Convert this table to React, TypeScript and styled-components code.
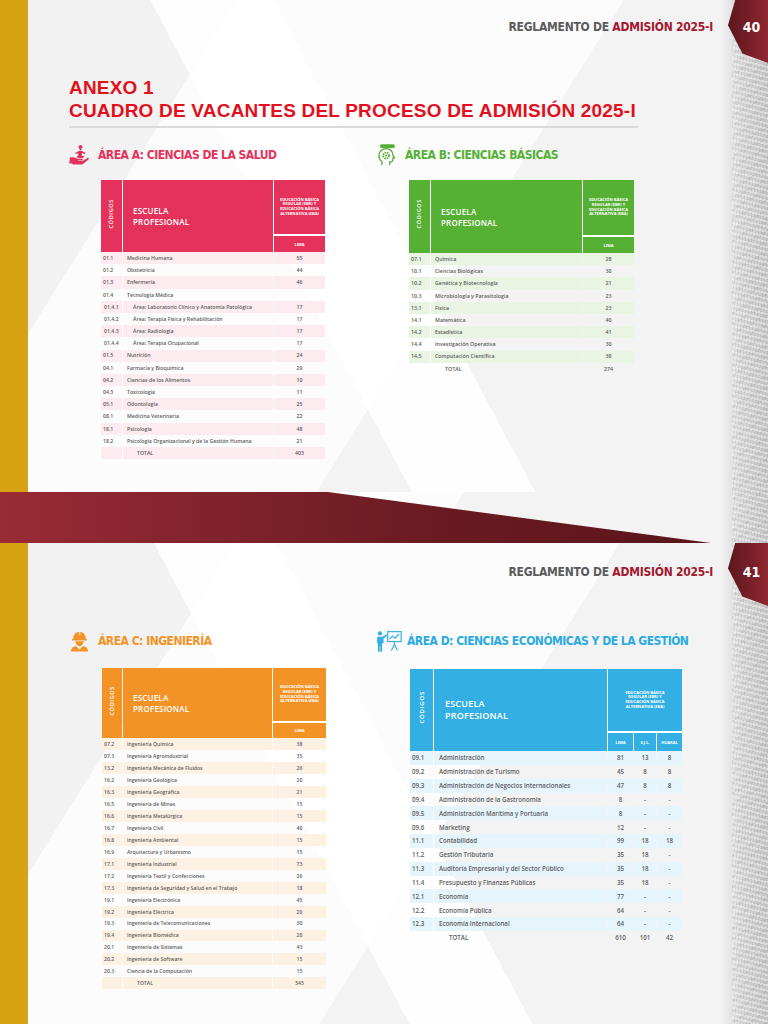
import React from 'react';
import styled, { createGlobalStyle } from 'styled-components';

const GlobalStyle = createGlobalStyle`
  * { box-sizing: border-box; }
  body { margin: 0; background: #f5f5f5; }
`;

const condensed = `"Liberation Sans Narrow", "DejaVu Sans Condensed", "Roboto Condensed", "Liberation Sans", sans-serif`;
const tableFont = `"Open Sans", "Liberation Sans", sans-serif`;

const pageBackground = `
  linear-gradient(to right, #d7a312 0 28px, transparent 28px),
  repeating-linear-gradient(97deg, rgba(90,90,90,.08) 0 1px, transparent 1px 3px) right top / 36px 100% no-repeat,
  repeating-linear-gradient(14deg, rgba(255,255,255,.4) 0 2px, transparent 2px 5px) right top / 36px 100% no-repeat,
  repeating-linear-gradient(-30deg, rgba(120,120,120,.10) 0 3px, transparent 3px 9px) right top / 36px 100% no-repeat,
  linear-gradient(to right, rgba(214,214,214,0), #d6d6d6 45%, #c6c6c6) right top / 48px 100% no-repeat,
  linear-gradient(62deg, transparent 0 40%, rgba(255,255,255,.9) 40% 52%, transparent 52%),
  linear-gradient(122deg, #f2f2f2 0 22%, #fcfcfc 22% 58%, #f3f3f3 58% 100%)
`;

const Sheet = styled.main`
  width: 768px;
  display: flex;
  flex-direction: column;
  overflow: hidden;
`;

const Page = styled.section<{ $h: number }>`
  height: ${(p) => p.$h}px;
  display: flex;
  flex-direction: column;
  background: ${pageBackground};
`;

const Band = styled.div`
  height: 51px;
  background: ${pageBackground};
  &::before {
    content: '';
    display: block;
    height: 100%;
    clip-path: polygon(0 0, 328px 0, 711px 100%, 0 100%);
    background: linear-gradient(to right, #982b36, #6b1b22 55%, #561318);
  }
`;

const TopBar = styled.header`
  display: flex;
  justify-content: flex-end;
  align-items: flex-start;
  height: 64px;
`;

const RunningHead = styled.div<{ $top: number }>`
  margin: ${(p) => p.$top}px 15px 0 0;
  font: 700 12px/16px ${condensed};
  letter-spacing: -0.25px;
  color: #5b5b5d;
  span { color: #a3182f; }
`;

const PageBadge = styled.div<{ $top: number }>`
  width: 40px;
  height: 63px;
  padding: ${(p) => p.$top}px 0 0 7px;
  text-align: center;
  clip-path: polygon(18% 0, 100% 0, 100% 100%, 36% 85%, 0 40%);
  background: linear-gradient(to right, #5c161c, #8f2731);
  color: #fff;
  font: 700 14px/16px ${condensed};
`;

const Body = styled.div`
  padding-left: 69px;
`;

const Title = styled.h1`
  margin: 12px 0 0;
  font: 700 19px/23px "Liberation Sans", Arial, sans-serif;
  color: #e30f1c;
  letter-spacing: 0.2px;
`;

const Divider = styled.hr`
  margin: 4px 0 0;
  width: 569px;
  height: 2px;
  border: 0;
  background: #dadada;
`;

const Columns = styled.div<{ $top: number }>`
  display: grid;
  grid-template-columns: 307px 1fr;
  align-items: start;
  margin-top: ${(p) => p.$top}px;
`;

const Area = styled.div`
  display: flex;
  flex-direction: column;
`;

const AreaHeading = styled.h2<{ $color: string; $gap: number }>`
  display: flex;
  align-items: center;
  gap: ${(p) => p.$gap}px;
  height: 24px;
  margin: 0;
  color: ${(p) => p.$color};
  font: 700 12px/16px ${condensed};
  letter-spacing: -0.5px;
  svg { flex: none; }
`;

const TableWrap = styled.div<{ $indent: number; $top: number }>`
  margin: ${(p) => p.$top}px 0 0 ${(p) => p.$indent}px;
`;

const Grid = styled.table<{
  $accent: string;
  $stripe: string;
  $font: number;
  $rowH: number;
  $width: number;
}>`
  width: ${(p) => p.$width + 2}px;
  margin-left: -1px;
  table-layout: fixed;
  border-collapse: separate;
  border-spacing: 1px 0;
  font-family: ${tableFont};

  th {
    padding: 0;
    background: ${(p) => p.$accent};
    color: #fff;
    font-weight: 700;
  }

  td {
    height: ${(p) => p.$rowH}px;
    padding: 0;
    font-size: ${(p) => p.$font}px;
    line-height: ${(p) => p.$font + 1}px;
    font-weight: 600;
    color: #5c5d60;
    white-space: nowrap;
    overflow: hidden;
  }

  tbody tr:nth-child(odd) td { background: ${(p) => p.$stripe}; }
`;

const CodesHead = styled.th<{ $size: number }>`
  vertical-align: middle;
  span {
    display: inline-block;
    writing-mode: vertical-rl;
    transform: rotate(180deg);
    font-size: ${(p) => p.$size}px;
    line-height: ${(p) => p.$size + 1}px;
    letter-spacing: 0.7px;
    font-weight: 600;
  }
`;

const SchoolHead = styled.th<{ $size: number; $pad: number }>`
  text-align: left;
  padding-left: ${(p) => p.$pad}px !important;
  font-size: ${(p) => p.$size}px;
  line-height: ${(p) => p.$size + 3}px;
  letter-spacing: 0.2px;
  font-weight: 600 !important;
`;

const LevelHead = styled.th<{ $h: number }>`
  height: ${(p) => p.$h}px;
  border-bottom: 2px solid #fff;
  font-size: 4px;
  line-height: 4.6px;
  text-align: center;
`;

const SubHead = styled.th<{ $h: number }>`
  height: ${(p) => p.$h}px;
  font-size: 4px;
  line-height: 5px;
  text-align: center;
  vertical-align: middle;
`;

const CodeCell = styled.td<{ $sub?: boolean }>`
  padding-left: ${(p) => (p.$sub ? 3 : 2)}px !important;
`;

const NameCell = styled.td<{ $pad: number; $sub?: boolean; $total?: boolean }>`
  padding-left: ${(p) => p.$pad + (p.$sub ? 6 : 0) + (p.$total ? 10 : 0)}px !important;
`;

const NumCell = styled.td`
  text-align: center;
`;

type Row = { code: string; name: string; vals: string[]; sub?: boolean; total?: boolean };

type TableSpec = {
  accent: string;
  stripe: string;
  width: number;
  cols: number[];
  subs: string[];
  headTop: number;
  headSub: number;
  rowH: number;
  font: number;
  headFont: number;
  pad: number;
  rows: Row[];
};

const VacancyTable: React.FC<{ spec: TableSpec }> = ({ spec }) => (
  <Grid
    $accent={spec.accent}
    $stripe={spec.stripe}
    $font={spec.font}
    $rowH={spec.rowH}
    $width={spec.width}
  >
    <colgroup>
      {spec.cols.map((w, i) => (
        <col key={i} style={{ width: w }} />
      ))}
    </colgroup>
    <thead>
      <tr>
        <CodesHead rowSpan={2} $size={spec.headFont * 0.68}>
          <span>CÓDIGOS</span>
        </CodesHead>
        <SchoolHead rowSpan={2} $size={spec.headFont} $pad={spec.pad + 6}>
          ESCUELA
          <br />
          PROFESIONAL
        </SchoolHead>
        <LevelHead colSpan={spec.subs.length} $h={spec.headTop}>
          EDUCACIÓN BÁSICA
          <br />
          REGULAR (EBR) Y
          <br />
          EDUCACIÓN BÁSICA
          <br />
          ALTERNATIVA (EBA)
        </LevelHead>
      </tr>
      <tr>
        {spec.subs.map((s) => (
          <SubHead key={s} $h={spec.headSub}>
            {s}
          </SubHead>
        ))}
      </tr>
    </thead>
    <tbody>
      {spec.rows.map((r, i) => (
        <tr key={i}>
          <CodeCell $sub={r.sub}>{r.code}</CodeCell>
          <NameCell $pad={spec.pad} $sub={r.sub} $total={r.total}>
            {r.name}
          </NameCell>
          {spec.subs.map((_, j) => (
            <NumCell key={j}>{r.vals[j] ?? ''}</NumCell>
          ))}
        </tr>
      ))}
    </tbody>
  </Grid>
);

const row = (code: string, name: string, ...vals: string[]): Row => ({ code, name, vals });
const subRow = (code: string, name: string, ...vals: string[]): Row => ({ code, name, vals, sub: true });
const totalRow = (...vals: string[]): Row => ({ code: '', name: 'TOTAL', vals, total: true });

const health: TableSpec = {
  accent: '#e5325a',
  stripe: '#fdecef',
  width: 224,
  cols: [21, 150, 51],
  subs: ['LIMA'],
  headTop: 56,
  headSub: 16,
  rowH: 12.2,
  font: 5.2,
  headFont: 8,
  pad: 4,
  rows: [
    row('01.1', 'Medicina Humana', '55'),
    row('01.2', 'Obstetricia', '44'),
    row('01.3', 'Enfermería', '46'),
    row('01.4', 'Tecnología Médica'),
    subRow('01.4.1', 'Área: Laboratorio Clínico y Anatomía Patológica', '17'),
    subRow('01.4.2', 'Área: Terapia Física y Rehabilitación', '17'),
    subRow('01.4.3', 'Área: Radiología', '17'),
    subRow('01.4.4', 'Área: Terapia Ocupacional', '17'),
    row('01.5', 'Nutrición', '24'),
    row('04.1', 'Farmacia y Bioquímica', '29'),
    row('04.2', 'Ciencias de los Alimentos', '10'),
    row('04.3', 'Toxicología', '11'),
    row('05.1', 'Odontología', '25'),
    row('08.1', 'Medicina Veterinaria', '22'),
    row('18.1', 'Psicología', '48'),
    row('18.2', 'Psicología Organizacional y de la Gestión Humana', '21'),
    totalRow('403'),
  ],
};

const basic: TableSpec = {
  accent: '#55b034',
  stripe: '#e9f4e2',
  width: 225,
  cols: [21, 151, 51],
  subs: ['LIMA'],
  headTop: 57,
  headSub: 16,
  rowH: 12.2,
  font: 5.3,
  headFont: 8,
  pad: 4,
  rows: [
    row('07.1', 'Química', '28'),
    row('10.1', 'Ciencias Biológicas', '30'),
    row('10.2', 'Genética y Biotecnología', '21'),
    row('10.3', 'Microbiología y Parasitología', '23'),
    row('13.1', 'Física', '23'),
    row('14.1', 'Matemática', '40'),
    row('14.2', 'Estadística', '41'),
    row('14.4', 'Investigación Operativa', '30'),
    row('14.5', 'Computación Científica', '38'),
    totalRow('274'),
  ],
};

const engineering: TableSpec = {
  accent: '#f39326',
  stripe: '#fdf1e4',
  width: 224,
  cols: [20, 149, 53],
  subs: ['LIMA'],
  headTop: 55,
  headSub: 15,
  rowH: 11.98,
  font: 5.1,
  headFont: 8,
  pad: 4,
  rows: [
    row('07.2', 'Ingeniería Química', '38'),
    row('07.3', 'Ingeniería Agroindustrial', '35'),
    row('13.2', 'Ingeniería Mecánica de Fluidos', '26'),
    row('16.2', 'Ingeniería Geológica', '20'),
    row('16.3', 'Ingeniería Geográfica', '21'),
    row('16.5', 'Ingeniería de Minas', '15'),
    row('16.6', 'Ingeniería Metalúrgica', '15'),
    row('16.7', 'Ingeniería Civil', '40'),
    row('16.8', 'Ingeniería Ambiental', '15'),
    row('16.9', 'Arquitectura y Urbanismo', '15'),
    row('17.1', 'Ingeniería Industrial', '73'),
    row('17.2', 'Ingeniería Textil y Confecciones', '26'),
    row('17.3', 'Ingeniería de Seguridad y Salud en el Trabajo', '18'),
    row('19.1', 'Ingeniería Electrónica', '45'),
    row('19.2', 'Ingeniería Eléctrica', '20'),
    row('19.3', 'Ingeniería de Telecomunicaciones', '30'),
    row('19.4', 'Ingeniería Biomédica', '20'),
    row('20.1', 'Ingeniería de Sistemas', '43'),
    row('20.2', 'Ingeniería de Software', '15'),
    row('20.3', 'Ciencia de la Computación', '15'),
    totalRow('545'),
  ],
};

const economics: TableSpec = {
  accent: '#33afe3',
  stripe: '#e6f4fb',
  width: 272,
  cols: [23, 173, 25, 22, 25],
  subs: ['LIMA', 'S.J.L.', 'HUARAL'],
  headTop: 64,
  headSub: 18,
  rowH: 13.85,
  font: 6.2,
  headFont: 9,
  pad: 5,
  rows: [
    row('09.1', 'Administración', '81', '13', '8'),
    row('09.2', 'Administración de Turismo', '45', '8', '8'),
    row('09.3', 'Administración de Negocios Internacionales', '47', '8', '8'),
    row('09.4', 'Administración de la Gastronomía', '8', '-', '-'),
    row('09.5', 'Administración Marítima y Portuaria', '8', '-', '-'),
    row('09.6', 'Marketing', '12', '-', '-'),
    row('11.1', 'Contabilidad', '99', '18', '18'),
    row('11.2', 'Gestión Tributaria', '35', '18', '-'),
    row('11.3', 'Auditoría Empresarial y del Sector Público', '35', '18', '-'),
    row('11.4', 'Presupuesto y Finanzas Públicas', '35', '18', '-'),
    row('12.1', 'Economía', '77', '-', '-'),
    row('12.2', 'Economía Pública', '64', '-', '-'),
    row('12.3', 'Economía Internacional', '64', '-', '-'),
    totalRow('610', '101', '42'),
  ],
};

const HealthIcon = () => (
  <svg width="22" height="22" viewBox="0 0 24 24" fill="#e5325a">
    <circle cx="12.5" cy="3.2" r="2.2" />
    <rect x="11.6" y="5" width="1.8" height="2" />
    <path d="M7 9.5 l4-2 h3 l4 2 l-1 1.3 l-3-1 v3.5 h-4 v-3.5 l-3 1 z" />
    <path d="M8.5 13 h8 l-1 2.2 h-6 z" />
    <path d="M1 14.5 h3.2 c2.4 0 3.6 1.6 5.8 1.6 h4.2 c1.2 0 1.2 1.8 0 1.8 h-4.4 v.6 h5 l5.2-3.2 c1.1-.7 2.2.6 1.2 1.5 l-5.2 4.6 c-.8.7-1.6.9-2.6.9 h-8.8 l-1.4-1 h-3 z" />
  </svg>
);

const ScienceIcon = () => (
  <svg width="22" height="22" viewBox="0 0 24 24" fill="none" stroke="#55b034" strokeWidth="1.4">
    <rect x="5" y="1" width="15" height="2.6" rx="1.3" fill="#55b034" />
    <path d="M6.5 23 v-4 c-2-1.4-3.3-3.6-3.3-6.4 c0-4.4 3.4-7.6 7.8-7.6 c4.4 0 7.4 3.2 7.4 7 l1.8 3.2 h-1.8 v2.6 c0 1-.8 1.6-1.8 1.6 h-1.6 v3.6" />
    <circle cx="11" cy="12.6" r="3.2" strokeDasharray="1.6 1" strokeWidth="2" />
    <circle cx="11" cy="12.6" r="1.1" fill="#55b034" stroke="none" />
  </svg>
);

const EngineerIcon = () => (
  <svg width="21" height="22" viewBox="0 0 24 24" fill="#f39326">
    <path d="M5 8.5 a7 7 0 0 1 14 0 v1 h1.4 v1.8 H3.6 v-1.8 H5 z" />
    <rect x="11" y="1" width="2" height="4.5" fill="#fff" opacity=".55" />
    <path d="M7.4 12.4 h9.2 c0 3.2-2 5.6-4.6 5.6 s-4.6-2.4-4.6-5.6 z" />
    <path d="M2.2 24 c0-3.4 2-5.4 5.6-6.2 l4.2 3.8 l4.2-3.8 c3.6.8 5.6 2.8 5.6 6.2 z" />
  </svg>
);

const PresenterIcon = () => (
  <svg width="27" height="22" viewBox="0 0 30 24">
    <g fill="#33afe3">
      <circle cx="4.4" cy="3.6" r="2.4" />
      <path d="M1.6 7.4 h5.4 l5.2-3 l.8 1.2 l-4.6 3.6 v5.4 h-1.6 v9.4 h-2 v-6.4 h-.6 v6.4 h-2 v-9.4 h-1 v-5 z" />
    </g>
    <g fill="none" stroke="#33afe3" strokeWidth="1.3">
      <rect x="13" y="1.6" width="15" height="11" />
      <path d="M15 10 l3.4-3.4 l2.6 2.2 l4.6-4.6" />
      <path d="M20.5 12.6 v3 M20.5 15.6 l-3.4 7 M20.5 15.6 l3.4 7" />
    </g>
  </svg>
);

const PageTop: React.FC<{ num: string; top: number }> = ({ num, top }) => (
  <TopBar>
    <RunningHead $top={top}>
      REGLAMENTO DE <span>ADMISIÓN 2025-I</span>
    </RunningHead>
    <PageBadge $top={top}>{num}</PageBadge>
  </TopBar>
);

const App: React.FC = () => (
  <Sheet>
    <GlobalStyle />
    <Page $h={492}>
      <PageTop num="40" top={19} />
      <Body>
        <Title>
          ANEXO 1
          <br />
          CUADRO DE VACANTES DEL PROCESO DE ADMISIÓN 2025-I
        </Title>
        <Divider />
        <Columns $top={15}>
          <Area>
            <AreaHeading $color="#e5325a" $gap={7}>
              <HealthIcon />
              ÁREA A: CIENCIAS DE LA SALUD
            </AreaHeading>
            <TableWrap $indent={32} $top={13}>
              <VacancyTable spec={health} />
            </TableWrap>
          </Area>
          <Area>
            <AreaHeading $color="#55b034" $gap={7}>
              <ScienceIcon />
              ÁREA B: CIENCIAS BÁSICAS
            </AreaHeading>
            <TableWrap $indent={33} $top={13}>
              <VacancyTable spec={basic} />
            </TableWrap>
          </Area>
        </Columns>
      </Body>
    </Page>
    <Band />
    <Page $h={481}>
      <PageTop num="41" top={21} />
      <Body>
        <Columns $top={22}>
          <Area>
            <AreaHeading $color="#f39326" $gap={8}>
              <EngineerIcon />
              ÁREA C: INGENIERÍA
            </AreaHeading>
            <TableWrap $indent={33} $top={15}>
              <VacancyTable spec={engineering} />
            </TableWrap>
          </Area>
          <Area>
            <AreaHeading $color="#29abe2" $gap={4}>
              <PresenterIcon />
              ÁREA D: CIENCIAS ECONÓMICAS Y DE LA GESTIÓN
            </AreaHeading>
            <TableWrap $indent={34} $top={16}>
              <VacancyTable spec={economics} />
            </TableWrap>
          </Area>
        </Columns>
      </Body>
    </Page>
  </Sheet>
);

export default App;
